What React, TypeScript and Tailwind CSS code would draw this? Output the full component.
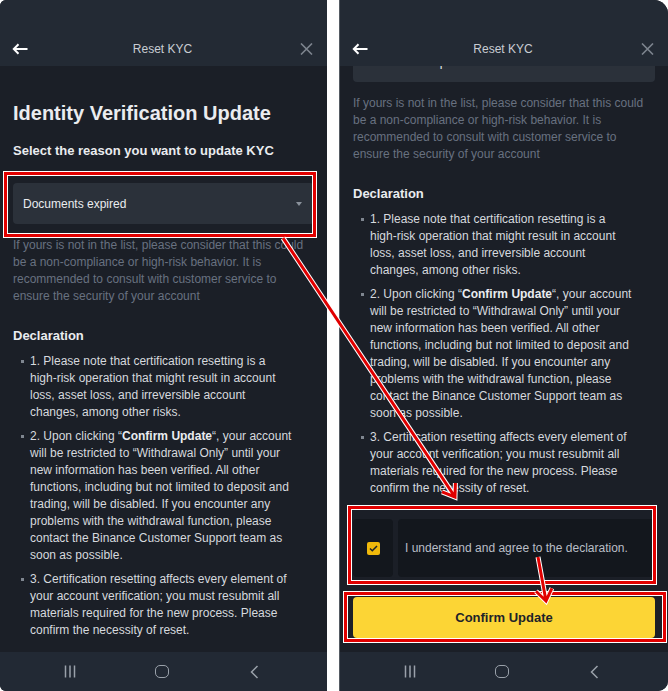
import React from "react";

function BackArrow() {
  return (
    <svg width="16" height="12" viewBox="0 0 16 12" fill="none">
      <path d="M15.5 6H1.8M6.5 1.2L1.8 6l4.7 4.8" stroke="#ffffff" strokeWidth="2" strokeLinejoin="miter" />
    </svg>
  );
}

function CloseIcon() {
  return (
    <svg width="13" height="12" viewBox="0 0 13 12" fill="none">
      <path d="M1 0.5l11 11M12 0.5l-11 11" stroke="#7d848e" strokeWidth="1.6" />
    </svg>
  );
}

function Header() {
  return (
    <div className="relative z-10 h-[66px] shrink-0 bg-[#232a34] pt-[32px]">
      <div className="h-[34px] flex items-center justify-between pl-[12px] pr-[14px]">
        <div className="w-[20px] flex items-center">
          <BackArrow />
        </div>
        <div className="text-[12px] text-[#c9cdd3]">Reset KYC</div>
        <div className="w-[20px] flex items-center justify-end">
          <CloseIcon />
        </div>
      </div>
    </div>
  );
}

function NavBar() {
  return (
    <div className="h-[39px] shrink-0 bg-[#222934] flex items-center pl-[24px]">
      <div className="w-[92px] flex justify-center">
        <svg width="14" height="13" viewBox="0 0 14 13" fill="none">
          <path d="M2.5 0.5v12M7 0.5v12M11.5 0.5v12" stroke="#9aa1aa" strokeWidth="1.5" />
        </svg>
      </div>
      <div className="w-[92px] flex justify-center">
        <div className="w-[14px] h-[13px] rounded-[5px] border-[1.5px] border-[#9aa1aa]" />
      </div>
      <div className="w-[92px] flex justify-center">
        <svg width="9" height="14" viewBox="0 0 9 14" fill="none">
          <path d="M7.5 1L1.5 7l6 6" stroke="#9aa1aa" strokeWidth="1.5" />
        </svg>
      </div>
    </div>
  );
}

function Bullet({ lines }: { lines: React.ReactNode[] }) {
  return (
    <li className="flex">
      <span className="w-[17px] shrink-0 pt-[7px] pl-[8px]">
        <span className="block w-[3px] h-[3px] bg-[#7f8690]" />
      </span>
      <span className="flex-1 flex flex-col">
        {lines.map((l, i) => (
          <span key={i} className="whitespace-nowrap">
            {l}
          </span>
        ))}
      </span>
    </li>
  );
}

function Content() {
  return (
    <div className="px-[13px] pt-[33px] pb-[40px]">
      <h1 className="text-[20px] leading-[28px] font-bold text-[#eaecef]">Identity Verification Update</h1>
      <p className="mt-[14px] text-[13px] leading-[20px] font-bold text-[#eaecef]">
        Select the reason you want to update KYC
      </p>
      <div className="mt-[22px] h-[41px] rounded-[4px] bg-[#2b313a] flex items-center justify-between pl-[10px] pr-[12px]">
        <span className="text-[12px] text-[#eaecef]">Documents expired</span>
        <svg width="6" height="4" viewBox="0 0 6 4">
          <path d="M0 0h6L3 4z" fill="#8a919b" />
        </svg>
      </div>
      <p className="mt-[13px] text-[12px] leading-[17px] text-[#687180]">
        If yours is not in the list, please consider that this could be a non-compliance or high-risk behavior. It is
        recommended to consult with customer service to ensure the security of your account
      </p>
      <h2 className="mt-[21px] text-[13px] leading-[20px] font-bold text-[#eaecef]">Declaration</h2>
      <ul className="mt-[7px] flex flex-col gap-[7px] text-[12px] leading-[17px] text-[#d6d9de]">
        <Bullet
          lines={[
            "1. Please note that certification resetting is a",
            "high-risk operation that might result in account",
            "loss, asset loss, and irreversible account",
            "changes, among other risks.",
          ]}
        />
        <Bullet
          lines={[
            <>
              2. Upon clicking “<span className="font-bold text-[#eaecef]">Confirm Update</span>“, your account
            </>,
            "will be restricted to “Withdrawal Only” until your",
            "new information has been verified. All other",
            "functions, including but not limited to deposit and",
            "trading, will be disabled. If you encounter any",
            "problems with the withdrawal function, please",
            "contact the Binance Customer Support team as",
            "soon as possible.",
          ]}
        />
        <Bullet
          lines={[
            "3. Certification resetting affects every element of",
            "your account verification; you must resubmit all",
            "materials required for the new process. Please",
            "confirm the necessity of reset.",
          ]}
        />
      </ul>
      <div className="mt-[22px] h-[58px] flex gap-[5px]">
        <div className="w-[40px] rounded-[4px] bg-[#13171d] flex items-center justify-center">
          <div className="w-[13px] h-[13px] rounded-[2px] bg-[#f0b90b] flex items-center justify-center">
            <svg width="9" height="7" viewBox="0 0 9 7" fill="none">
              <path d="M1 3.5l2.3 2.3L8 1" stroke="#1e2329" strokeWidth="1.5" />
            </svg>
          </div>
        </div>
        <div className="flex-1 rounded-[4px] bg-[#13171d] flex items-center pl-[7px] text-[12px] text-[#b9bec6]">
          I understand and agree to the declaration.
        </div>
      </div>
      <div className="mt-[20px] h-[41px] rounded-[4px] bg-[#fcd535] flex items-center justify-center text-[13px] font-bold text-[#1e2329]">
        Confirm Update
      </div>
    </div>
  );
}

function Phone({ scrolled, className }: { scrolled?: boolean; className: string }) {
  return (
    <div className={"h-[691px] flex flex-col overflow-hidden bg-[#1b1f27] " + className}>
      <Header />
      <div className="flex-1 overflow-hidden">
        <div className={scrolled ? "mt-[-142px]" : ""}>
          <Content />
        </div>
      </div>
      <NavBar />
    </div>
  );
}

function Arrow({ x1, y1, x2, y2, h1, h2 }: { x1: number; y1: number; x2: number; y2: number; h1: [number, number]; h2: [number, number] }) {
  const d = `M${x1} ${y1}L${x2} ${y2}M${h1[0]} ${h1[1]}L${x2} ${y2}L${h2[0]} ${h2[1]}`;
  return (
    <g fill="none">
      <path d={d} stroke="#ffffff" strokeWidth="5" strokeLinejoin="miter" />
      <path d={d} stroke="#e10000" strokeWidth="3" strokeLinejoin="miter" />
    </g>
  );
}

function RedBox({ x, y, w, h }: { x: number; y: number; w: number; h: number }) {
  return (
    <g fill="none">
      <rect x={x} y={y} width={w} height={h} stroke="#ffffff" strokeWidth="5" />
      <rect x={x} y={y} width={w} height={h} stroke="#e10000" strokeWidth="3" />
    </g>
  );
}

export default function App() {
  return (
    <div className="relative w-[668px] h-[691px] bg-white flex font-['Liberation_Sans',Arial,sans-serif]">
      <Phone className="w-[327px] rounded-tl-[6px] rounded-bl-[6px]" />
      <div className="w-[12px] shrink-0" />
      <Phone scrolled className="w-[329px] border-l border-[#555b63] rounded-tr-[14px] rounded-br-[10px]" />
      <svg className="absolute inset-0 pointer-events-none" width="668" height="691" viewBox="0 0 668 691">
        <RedBox x={5.5} y={173.5} w={309} h={62} />
        <RedBox x={349.5} y={507.5} w={305} h={75} />
        <RedBox x={345.5} y={593.5} w={319} h={47} />
        <Arrow x1={283} y1={238} x2={455} y2={497} h1={[455.4, 483]} h2={[442, 491.9]} />
        <Arrow x1={538} y1={557} x2={546} y2={601} h1={[551.9, 588.3]} h2={[536, 591.2]} />
      </svg>
    </div>
  );
}
